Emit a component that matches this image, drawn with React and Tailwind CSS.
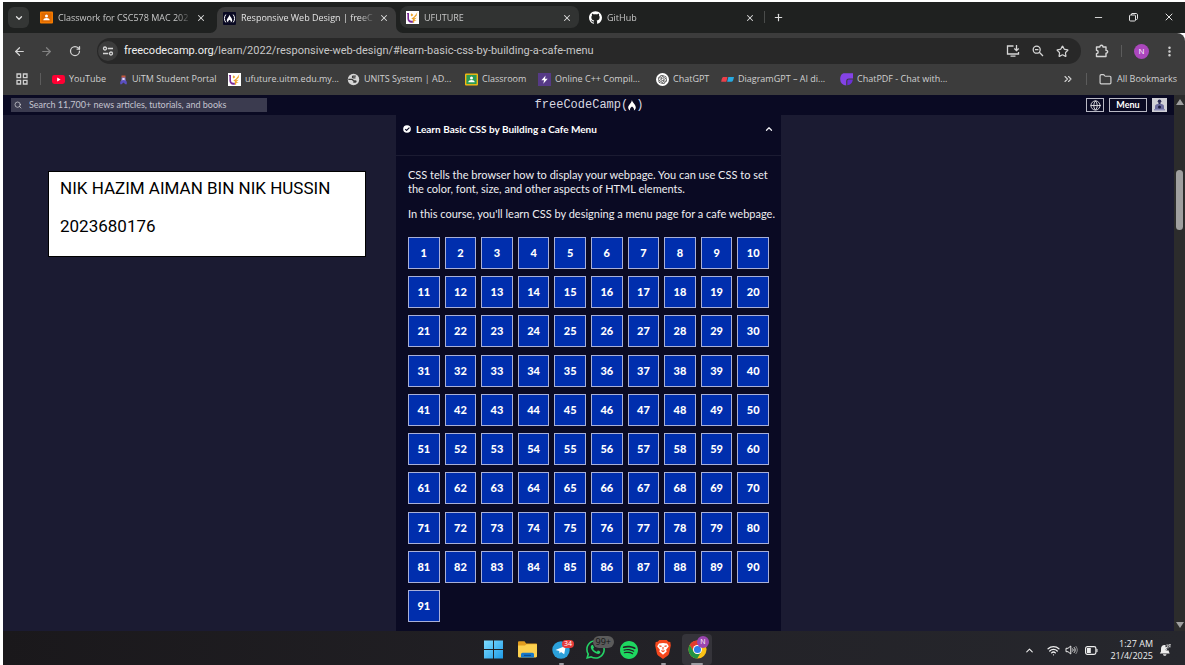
import React from "react";
import {
  ArrowLeft,
  ArrowRight,
  ChevronDown,
  ChevronUp,
  ChevronsRight,
  EllipsisVertical,
  Folder,
  Globe,
  Minus,
  Plus,
  RotateCw,
  Search,
  Star,
  Wifi,
  X,
  ZoomOut,
} from "lucide-react";
import { SiBrave, SiOpenai, SiSpotify, SiWhatsapp, SiGithub } from "react-icons/si";

const UI = "font-['Open_Sans','Noto_Sans',sans-serif]";

function ClassroomIcon({ frame, board }) {
  return (
    <svg viewBox="0 0 13 13" className="size-[13px] shrink-0" aria-hidden="true">
      <rect x="0" y="0.5" width="13" height="12" rx="1" fill={frame} />
      <rect x="1.4" y="1.9" width="10.2" height="9.2" fill={board} />
      <circle cx="6.5" cy="5" r="1.5" fill="#fff" />
      <path d="M3.3 9.3c0-1.6 1.6-2.3 3.2-2.3s3.2.7 3.2 2.3z" fill="#fff" />
    </svg>
  );
}

function UfutureIcon() {
  return (
    <svg viewBox="0 0 13 13" className="size-[13px] shrink-0" aria-hidden="true">
      <rect width="13" height="13" fill="#fff" />
      <path d="M.8 2h2.200v5.300c0 2.500 2 2.800 3.600 2.300l.5 1.900C4 12.400 1.400 11 1.400 7.600V3.500z" fill="#7b2a96" />
      <path d="M5.200 7.300c2-.3 3.800-2.500 6.300-6.300-.6 1.900-.9 2.800-.7 3.400L8 7.200l2.800-.4L8.300 8.800l2.500.4-2.600.9v1.700H6.900V8.600z" fill="#eda52c" />
      <path d="M5.600 2.300 7.300 4 5.600 5.500 4.600 4z" fill="#eda52c" />
    </svg>
  );
}

function FreeCodeCampIcon() {
  return (
    <svg viewBox="0 0 13 13" className="size-[13px] shrink-0" aria-hidden="true">
      <rect width="13" height="13" rx="1" fill="#0a0a23" />
      <path d="M2.800 2.600C1 4.700 1 8.300 2.800 10.400M10.200 2.600c1.800 2.100 1.800 5.700 0 7.800" fill="none" stroke="#fff" strokeWidth="1" />
      <path d="M6.300 2.800C6.800 4.500 9.200 6 9.200 8.300c0 1-.6 1.800-1.500 2.100.4-1 .1-1.700-1.200-2.600-1.300.9-1.600 1.600-1.200 2.600-.9-.3-1.500-1.100-1.500-2.100 0-2 2.300-3 2.500-5.500z" fill="#fff" />
    </svg>
  );
}

function YouTubeIcon() {
  return (
    <svg viewBox="0 0 13 13" className="size-[13px] shrink-0" aria-hidden="true">
      <rect y="2" width="13" height="9" rx="2.400" fill="#ff0033" />
      <path d="M5.200 4.600v3.800L8.600 6.500z" fill="#fff" />
    </svg>
  );
}

function UitmIcon() {
  return (
    <svg viewBox="0 0 9 13" className="h-[13px] w-[9px] shrink-0" aria-hidden="true">
      <path d="M2.500 2.500h4v2.300h-4z" fill="#c65a3c" />
      <path d="M2.700 4.500h3.600l.5 4H2.200z" fill="#8a7bd8" />
      <path d="M1.200 8.500 4.500 7l3.300 1.500V11.200H6.300L4.500 9.500 2.700 11.200H1.200z" fill="#5a4fc0" />
      <path d="M3.500 5h2v2h-2z" fill="#e4dcf5" />
    </svg>
  );
}

function WorldIcon() {
  return (
    <svg viewBox="0 0 13 13" className="size-[13px] shrink-0" aria-hidden="true">
      <circle cx="6.500" cy="6.500" r="5.700" fill="#d5d5d5" />
      <path d="M8.800 3.100H6.200c-1 0-1 1.600 0 1.700h2.300M1.300 6.300h3.500c1.300 0 1 1.500 2.200 1.500h1.500c.8 0 .6 1.300-.3 1.400H6.300" fill="none" stroke="#3c3c3c" strokeWidth="1.300" />
    </svg>
  );
}

function CppIcon() {
  return (
    <svg viewBox="0 0 13 13" className="size-[13px] shrink-0" aria-hidden="true">
      <rect width="13" height="13" fill="#563a86" />
      <path d="M7.600 2.400 3.400 7.300h2.700L5.300 10.700 9.700 5.700H7z" fill="#fff" />
    </svg>
  );
}

function ChatGptIcon() {
  return (
    <span className="flex size-[13px] shrink-0 items-center justify-center rounded-full bg-white text-[#222]">
      <SiOpenai size={9} />
    </span>
  );
}

function DiagramIcon() {
  return (
    <svg viewBox="0 0 13 13" className="size-[13px] shrink-0" aria-hidden="true">
      <path d="M2.500 4h4L5.300 8.800H.2c.3-2 .8-4.800 2.300-4.800z" fill="#ea3f4a" />
      <path d="M7.300 4H13c-.5 2.500-1 4.800-2.600 4.800H6.100z" fill="#27a9e1" />
    </svg>
  );
}

function ChatPdfIcon() {
  return (
    <svg viewBox="0 0 13 13" className="size-[13px] shrink-0" aria-hidden="true">
      <path d="M4.500.300H13v5.200H9C7 5.500 6.200 6.800 6.200 8.500v4A6 6 0 0 1 .2 6.500C.2 3 1.500.3 4.500.3z" fill="#8443e6" />
      <path d="M7.300 12.300V8.400c0-1.200.6-1.800 1.800-1.800h3.700c-.2 3.200-2.500 5.500-5.500 5.700z" fill="#6b2fd6" />
    </svg>
  );
}

const tabs = [
  { title: "Classwork for CSC578 MAC 202", icon: <ClassroomIcon frame="#f57c00" board="#e06a00" /> },
  { title: "Responsive Web Design | freeC", icon: <FreeCodeCampIcon />, active: true },
  { title: "UFUTURE", icon: <UfutureIcon />, hover: true },
  { title: "GitHub", icon: <SiGithub size={13} className="shrink-0 text-white" /> },
];

const bookmarks = [
  { label: "YouTube", icon: <YouTubeIcon />, width: "w-[67px]" },
  { label: "UiTM Student Portal", icon: <UitmIcon />, width: "w-[109px]" },
  { label: "ufuture.uitm.edu.my...", icon: <UfutureIcon />, width: "w-[119px]" },
  { label: "UNITS System | AD...", icon: <WorldIcon />, width: "w-[118px]" },
  { label: "Classroom", icon: <ClassroomIcon frame="#f5b912" board="#2a9a55" />, width: "w-[73px]" },
  { label: "Online C++ Compil...", icon: <CppIcon />, width: "w-[118px]" },
  { label: "ChatGPT", icon: <ChatGptIcon />, width: "w-[65px]" },
  { label: "DiagramGPT – AI di...", icon: <DiagramIcon />, width: "w-[119px]" },
  { label: "ChatPDF - Chat with...", icon: <ChatPdfIcon />, width: "w-[112px]" },
];

function Tab({ title, icon, active, hover }) {
  const tone = active
    ? "h-[26px] rounded-t-lg bg-[#3c3c3c] pb-1 text-[#e3e3e3]"
    : hover
      ? "mb-[5px] h-[22px] rounded-lg bg-[#313332] pt-px text-[#c7c7c7]"
      : "mb-[5px] h-[22px] pt-px text-[#c7c7c7]";
  return (
    <div className={`relative flex w-[179px] items-center pl-1.5 pr-[7px] ${tone}`}>
      {active && (
        <>
          <svg viewBox="0 0 7 7" className="absolute bottom-0 -left-[7px] size-[7px]" aria-hidden="true">
            <path d="M7 0v7H0a7 7 0 0 0 7-7z" fill="#3c3c3c" />
          </svg>
          <svg viewBox="0 0 7 7" className="absolute bottom-0 -right-[7px] size-[7px]" aria-hidden="true">
            <path d="M0 0v7h7a7 7 0 0 1-7-7z" fill="#3c3c3c" />
          </svg>
        </>
      )}
      {icon}
      <span className="ml-[5px] min-w-0 flex-1 overflow-hidden whitespace-nowrap [mask-image:linear-gradient(to_right,black_88%,transparent)]">
        {title}
      </span>
      <button aria-label={`Close ${title}`} className="ml-1 text-[#dedede]">
        <X size={10} strokeWidth={2.5} />
      </button>
    </div>
  );
}

function TabStrip() {
  return (
    <div className="flex h-[31px] items-end bg-[#1f2120] pl-[5px] text-[9px]">
      <button aria-label="Search tabs" className="mb-[5px] flex size-[21px] items-center justify-center rounded-md bg-[#343635] text-[#e3e3e3]">
        <ChevronDown size={10} strokeWidth={3} />
      </button>
      <div className="ml-[5px] flex items-end gap-1">
        {tabs.map((t) => (
          <Tab key={t.title} {...t} />
        ))}
      </div>
      <span className="mb-2.5 ml-0.5 h-3 w-px bg-[#4a4c4b]" />
      <button aria-label="New tab" className="mb-2.5 ml-2 text-[#dedede]">
        <Plus size={11} strokeWidth={2.500} />
      </button>
      <div className="mb-2.5 ml-auto flex items-center gap-6 pr-2.5 text-[#e3e3e3]">
        <button aria-label="Minimize">
          <Minus size={11} strokeWidth={2} />
        </button>
        <button aria-label="Restore">
          <svg viewBox="0 0 11 11" className="size-[11px]" fill="none" stroke="currentColor" strokeWidth="1" aria-hidden="true">
            <rect x="1.500" y="3" width="6" height="6" rx="1" />
            <path d="M3.500 3V2c0-.5.400-.5.500-.5h4c1 0 1.500.5 1.500 1.500v3.500c0 .5-.300 1-1 1h-1" />
          </svg>
        </button>
        <button aria-label="Close window">
          <X size={12} strokeWidth={2} />
        </button>
      </div>
    </div>
  );
}

function AddressRow() {
  return (
    <div className="flex h-[33px] items-center pl-2.5 pr-[9px] pt-[3px] text-[#d5d5d5]">
      <button aria-label="Back"><ArrowLeft size={13} strokeWidth={2.200} /></button>
      <button aria-label="Forward" className="ml-3.5 text-[#828282]"><ArrowRight size={13} strokeWidth={2.200} /></button>
      <button aria-label="Reload" className="ml-4"><RotateCw size={12} strokeWidth={2.500} /></button>
      <div className="ml-4 flex h-[26px] flex-1 items-center rounded-full bg-[#282828] pl-px pr-3">
        <button aria-label="Site information" className="flex size-5 shrink-0 items-center justify-center rounded-full bg-[#3c3c3c]">
          <svg viewBox="0 0 12 12" className="size-3" fill="none" stroke="currentColor" strokeWidth="1.300" aria-hidden="true">
            <circle cx="3" cy="3.500" r="1.500" />
            <path d="M5.800 3.500H11M1 8.500h5.200" />
            <circle cx="9" cy="8.500" r="1.500" />
          </svg>
        </button>
        <p className="ml-1.5 flex-1 whitespace-nowrap font-[Roboto,sans-serif] text-[11px] text-[#c7c7c7]">
          <span className="text-[#f0f0f0]">freecodecamp.org</span>
          /learn/2022/responsive-web-design/#learn-basic-css-by-building-a-cafe-menu
        </p>
        <div className="flex items-center gap-3">
          <button aria-label="Install app">
            <svg viewBox="0 0 14 14" className="size-3.5" fill="none" stroke="currentColor" strokeWidth="1.300" aria-hidden="true">
              <path d="M7.500 2H1.500v8h11V8M4.500 12.200h5M10.500 1v5.500M8.300 4.500l2.200 2.200 2.200-2.200" />
            </svg>
          </button>
          <button aria-label="Zoom">
            <svg viewBox="0 0 12 12" className="size-3" fill="none" stroke="currentColor" strokeWidth="1.300" aria-hidden="true">
              <circle cx="4.700" cy="4.700" r="3.500" />
              <path d="M7.300 7.300 11 11M3 4.700h3.400" />
            </svg>
          </button>
          <button aria-label="Bookmark this tab"><Star size={13} strokeWidth={2.200} /></button>
        </div>
      </div>
      <button aria-label="Extensions" className="ml-3.5">
        <svg viewBox="0 0 14 14" className="size-3.5" fill="none" stroke="currentColor" strokeWidth="1.400" strokeLinejoin="round" aria-hidden="true">
          <path d="M1.500 3h3.300c0-2.300 3.200-2.300 3.200 0h3v3.400c2.300 0 2.300 2.800 0 2.800v3.300H1.500V9.600c2.200-.3 2.200-3.100 0-3.400z" />
        </svg>
      </button>
      <span className="ml-3 h-3 w-px bg-[#5c5c5c]" />
      <button aria-label="Profile" className="ml-3 flex size-[15px] items-center justify-center rounded-full bg-[#ab47bc] text-[8px] text-white">
        N
      </button>
      <button aria-label="Chrome menu" className="ml-3.5"><EllipsisVertical size={13} strokeWidth={2.600} /></button>
    </div>
  );
}

function BookmarksBar() {
  return (
    <nav className="flex h-[29px] items-center whitespace-nowrap pb-[3px] pl-[13px] pr-2 text-[9px] text-[#d0d0d0]">
      <button aria-label="Apps">
        <svg viewBox="0 0 12 12" className="size-3" fill="none" stroke="currentColor" strokeWidth="1.300" aria-hidden="true">
          <path d="M1 1h3.600v3.600H1zM7.400 1H11v3.600H7.400zM1 7.400h3.600V11H1zM7.400 7.400H11V11H7.400z" />
        </svg>
      </button>
      <span className="ml-3 mr-[11px] h-3 w-px bg-[#5c5c5c]" />
      {bookmarks.map((b) => (
        <a key={b.label} href="#" className={`flex shrink-0 items-center gap-1 ${b.width}`}>
          {b.icon}
          <span>{b.label}</span>
        </a>
      ))}
      <button aria-label="More bookmarks" className="ml-auto"><ChevronsRight size={12} strokeWidth={2.200} /></button>
      <span className="ml-3 h-3 w-px bg-[#5c5c5c]" />
      <a href="#" className="ml-3 flex items-center gap-[5px]">
        <Folder size={13} strokeWidth={2.200} />
        <span>All Bookmarks</span>
      </a>
    </nav>
  );
}

function SiteHeader() {
  return (
    <header className="grid h-5 grid-cols-[1fr_auto_1fr] items-center bg-[#0a0a23] pl-2 pr-[7px] text-[#dfdfe2]">
      <label className="flex h-3.5 w-full max-w-64 items-center bg-[#3b3b4f]">
        <Search size={8} strokeWidth={2} className="ml-[3px] mr-px shrink-0" />
        <input
          type="search"
          aria-label="Search"
          placeholder="Search 11,700+ news articles, tutorials, and books"
          className="ml-1.5 h-3.5 min-w-0 flex-1 bg-transparent text-[9px] leading-[14px] outline-none placeholder:text-[#c4c4cf]"
        />
      </label>
      <a href="#" className="flex items-center font-['Liberation_Mono',monospace] text-xs leading-5 text-[#d8d8e0]">
        freeCodeCamp(
        <svg viewBox="0 0 8 12" className="h-3 w-2" aria-hidden="true">
          <path d="M3.900 1C4.500 3.800 7.800 5.500 7.800 8.600c0 1.400-.8 2.400-1.900 2.800.4-1.500 0-2.500-1.900-4-1.900 1.500-2.300 2.500-1.900 4C1 11 .2 10 .2 8.600.2 5.800 3.500 4.500 3.900 1z" fill="#fff" />
        </svg>
        )
      </a>
      <div className="flex items-center justify-end gap-[5px]">
        <button aria-label="Language" className="flex h-3.5 w-[18px] items-center justify-center border border-[#b9b9c4]">
          <Globe size={11} strokeWidth={2} />
        </button>
        <button className="flex h-3.5 w-[38px] items-center justify-center border border-[#b9b9c4] text-[9px] font-bold text-white">
          Menu
        </button>
        <button aria-label="Account" className="h-3.5 w-[15px] bg-[#d0d0d5]">
          <svg viewBox="0 0 15 14" className="h-3.5 w-[15px]" aria-hidden="true">
            <circle cx="7.500" cy="3.200" r="1.800" fill="#2c2c55" />
            <path d="M6.500 4.500h2v2h-2z" fill="#2c2c55" />
            <path d="M3 12V8.500c0-2 1.500-2.500 4.500-2.500s4.500.5 4.500 2.500V12z" fill="#6a6a9c" />
            <circle cx="7.500" cy="9" r="1.500" fill="#1b1b3c" />
            <path d="M2 11h11v1.500H2z" fill="#8a8ab4" />
          </svg>
        </button>
      </div>
    </header>
  );
}

function CoursePanel() {
  const steps = Array.from({ length: 91 }, (_, i) => i + 1);
  return (
    <section className="flex flex-col bg-[#0a0a23] text-[11px] leading-[14px] text-[#eeeef2]">
      <button className="flex h-[41px] w-full items-start border-b border-[#1b1b32] px-[7px] pt-[7px] text-left">
        <svg viewBox="0 0 9 9" className="mr-[5px] mt-[3px] size-2 shrink-0" aria-hidden="true">
          <circle cx="4.500" cy="4.500" r="4.300" fill="#fff" />
          <path d="M2.500 4.700 4 6.200 7.200 2.900" fill="none" stroke="#0a0a23" strokeWidth="1.300" />
        </svg>
        <span className="flex-1 text-[10px] font-bold text-white">Learn Basic CSS by Building a Cafe Menu</span>
        <ChevronUp size={10} strokeWidth={3} className="mt-0.5" />
      </button>
      <div className="flex flex-1 flex-col px-3 pb-[9px] pt-3">
        <p className="-mr-2">
          CSS tells the browser how to display your webpage. You can use CSS to set
          <br />
          the color, font, size, and other aspects of HTML elements.
        </p>
        <p className="-mr-2 mt-[11px]">In this course, you'll learn CSS by designing a menu page for a cafe webpage.</p>
        <div className="mt-4 grid flex-1 grid-cols-10 content-between gap-x-[5px] gap-y-[7px]">
          {steps.map((n) => (
            <a
              key={n}
              href={`#step-${n}`}
              className="flex h-8 items-center justify-center border border-[#a9b0d8] bg-[#002ead] font-black text-white"
            >
              {n}
            </a>
          ))}
        </div>
      </div>
    </section>
  );
}

function PageScrollbar() {
  return (
    <div className="flex w-[11px] shrink-0 flex-col items-center bg-[#2c2c2c]" aria-hidden="true">
      <svg viewBox="0 0 8 6" className="mt-1 h-1.5 w-2">
        <path d="M4 0 8 6H0z" fill="#9f9f9f" />
      </svg>
      <span className="mt-[65px] h-[60px] w-[7px] rounded-full bg-[#9f9f9f]" />
      <svg viewBox="0 0 8 6" className="mb-[3px] mt-auto h-1.5 w-2">
        <path d="M0 0h8L4 6z" fill="#9f9f9f" />
      </svg>
    </div>
  );
}

function TaskbarApp({ label, children, running, current }) {
  return (
    <button
      aria-label={label}
      className={`relative flex h-[31px] w-[30px] items-center justify-center rounded ${current ? "bg-[#35343a]" : ""}`}
    >
      {children}
      {running && <span className={`absolute bottom-0 h-0.5 rounded-full bg-[#9c9ca2] ${current ? "w-3" : "w-[5px]"}`} />}
    </button>
  );
}

function Taskbar() {
  return (
    <footer className="grid h-[34px] grid-cols-[1fr_auto_1fr] items-center bg-linear-to-r from-[#1a181b] via-[#222126] to-[#26272d] pr-3.5">
      <span />
      <div className="ml-4 flex gap-1 pt-[3px]">
        <TaskbarApp label="Start">
          <svg viewBox="0 0 19 19" className="size-[19px]" aria-hidden="true">
            <defs>
              <linearGradient id="win" x1="0" y1="0" x2="1" y2="1">
                <stop offset="0" stopColor="#7fdcff" />
                <stop offset="1" stopColor="#1e9be8" />
              </linearGradient>
            </defs>
            <path d="M0 .5h9v8.600H0zM10 .5h9v8.600h-9zM0 10h9v8.600H0zM10 10h9v8.600h-9z" fill="url(#win)" />
          </svg>
        </TaskbarApp>
        <TaskbarApp label="File Explorer">
          <svg viewBox="0 0 19 17" className="h-[17px] w-[19px]" aria-hidden="true">
            <path d="M0 1.500C0 .7.500.3 1.200.3h5.300L8.200 2.500H18c.6 0 1 .4 1 1V6H0z" fill="#e19c1f" />
            <path d="M0 4.500h7l1.500-1.200H19v12c0 .7-.4 1.200-1.200 1.200H1.200C.4 16.500 0 16 0 15.300z" fill="#fcd04f" />
            <path d="M3 16.500v-3c0-1 .6-1.700 1.600-1.700h9.800c1 0 1.600.7 1.600 1.700v3z" fill="#1778c9" />
            <path d="M6 13.800h7v1.200H6z" fill="#0e4f8e" />
          </svg>
        </TaskbarApp>
        <TaskbarApp label="Telegram" running>
          <svg viewBox="0 0 18 18" className="size-[18px]" aria-hidden="true">
            <circle cx="9" cy="9" r="8.700" fill="#2ba0da" />
            <path d="M3.500 8.900 13.800 4.800 12.200 13.300 9 11 7.500 12.600 7.200 10z" fill="#fff" />
          </svg>
          <span className="absolute right-0.5 top-1.5 rounded-sm bg-[#e5393a] px-0.5 text-[7px] leading-[8px] text-white">34</span>
        </TaskbarApp>
        <TaskbarApp label="WhatsApp">
          <SiWhatsapp size={19} className="text-[#25d366]" />
          <span className="absolute -right-1 top-0.5 rounded-full bg-[#5b5b5b] px-[3px] text-[9px] leading-3 text-[#161616]">99+</span>
        </TaskbarApp>
        <TaskbarApp label="Spotify">
          <SiSpotify size={18} className="text-[#1ed760]" />
        </TaskbarApp>
        <TaskbarApp label="Brave" running>
          <svg viewBox="0 0 16 19" className="h-[19px] w-4" aria-hidden="true">
            <path d="M4.300 0h7.400l1.700 1.800 1.900.3.500 3.400-1.700 8c-.3 1.200-1 2-1.900 2.600L8 19l-4.200-2.900c-.9-.6-1.600-1.400-1.900-2.600l-1.700-8 .5-3.400 1.900-.3z" fill="#f5471d" />
            <path d="M4 3.600 8 3l4 .6 1.800 2.700-2.700 3.500.6 1.600L8 14.800l-3.700-3.400.6-1.600-2.700-3.500z" fill="#fff" />
            <path d="M4.300 5.900 6.500 6.400M11.700 5.900 9.500 6.400M8 7v2.600M6.400 10.600 8 11.500l1.600-.9" fill="none" stroke="#f5471d" strokeWidth="1.100" />
          </svg>
        </TaskbarApp>
        <TaskbarApp label="Google Chrome" running current>
          <svg viewBox="0 0 20 20" className="size-[19px]" aria-hidden="true">
            <circle cx="10" cy="10" r="9.500" fill="#fbc116" />
            <path d="M1.800 5.200A9.500 9.500 0 0 1 18.300 5.400H10A4.600 4.600 0 0 0 6 12.300z" fill="#e33b2e" />
            <path d="M1.800 5.200A9.500 9.500 0 0 0 9.700 19.500L14 12.300A4.600 4.600 0 0 1 6 12.300z" fill="#229342" />
            <circle cx="10" cy="10" r="4.700" fill="#fff" />
            <circle cx="10" cy="10" r="3.700" fill="#2f7de9" />
          </svg>
          <span className="absolute right-[3px] top-0.5 flex size-3 items-center justify-center rounded-full bg-[#9a45b0] text-[7px] text-white">N</span>
        </TaskbarApp>
      </div>
      <div className="flex items-center justify-end pt-1 text-[#ededed]">
        <button aria-label="Show hidden icons"><ChevronUp size={11} strokeWidth={2.400} /></button>
        <Wifi size={13} strokeWidth={2.400} className="ml-3" />
        <svg viewBox="0 0 13 12" className="ml-[5px] h-3 w-[13px]" fill="none" stroke="currentColor" strokeWidth="1" aria-hidden="true">
          <path d="M1 4.300h2L5.800 2v8L3 7.700H1zM7.500 4.500c.8.800.8 2.200 0 3M9 3.200c1.500 1.600 1.500 4 0 5.600" />
          <path d="M10.600 2c2.200 2.400 2.200 5.600 0 8" opacity=".5" />
        </svg>
        <svg viewBox="0 0 13 9" className="ml-[7px] h-[9px] w-[13px]" aria-hidden="true">
          <rect x=".6" y=".6" width="10.300" height="7.800" rx="1.800" fill="none" stroke="currentColor" strokeWidth="1.200" />
          <rect x="2" y="2" width="3.800" height="5" fill="currentColor" />
          <path d="M11.500 3h1v3h-1z" fill="currentColor" />
        </svg>
        <div className="ml-3 text-right text-[9px] leading-3">
          <p>1:27 AM</p>
          <p>21/4/2025</p>
        </div>
        <svg viewBox="0 0 12 13" className="ml-1.5 h-[13px] w-3" aria-hidden="true">
          <path d="M5.500 1C3 1 2 2.800 2 5v2.500L.8 9.500h9.900L9.800 7.500V6.600H6.500V5.400L8 3.300H6.500V1z" fill="#ededed" />
          <path d="M4 10.300h3.500c-.3 2-3.200 2-3.500 0z" fill="#ededed" />
          <path d="M7.300 1h2.200L7.300 3.800h2.400M6 5h2L6 7.300h2.200M9.800.600h1.800L9.900 2.800h1.800" fill="none" stroke="#ededed" strokeWidth=".8" />
        </svg>
      </div>
    </footer>
  );
}

export default function App() {
  return (
    <div className="flex min-h-screen flex-col bg-white pl-[3px] pt-0.5">
      <div className={UI}>
        <TabStrip />
        <div className="rounded-tr-lg bg-[#3c3c3c]">
          <AddressRow />
          <BookmarksBar />
        </div>
      </div>
      <div className="flex flex-1 font-[Lato,sans-serif]">
        <div className="flex min-w-0 flex-1 flex-col bg-[#1b1b32]">
          <SiteHeader />
          <main className="grid flex-1 grid-cols-[1fr_minmax(0,385px)_1fr]">
            <aside className="pl-[45px] pr-[30px] pt-14">
              <div className="h-[86px] border border-black bg-white px-[11px] pt-1 font-[Roboto,sans-serif] text-[17px] leading-6 text-black">
                <p>NIK HAZIM AIMAN BIN NIK HUSSIN</p>
                <p className="mt-3.5">2023680176</p>
              </div>
            </aside>
            <CoursePanel />
          </main>
        </div>
        <PageScrollbar />
      </div>
      <div className={UI}>
        <Taskbar />
      </div>
    </div>
  );
}
